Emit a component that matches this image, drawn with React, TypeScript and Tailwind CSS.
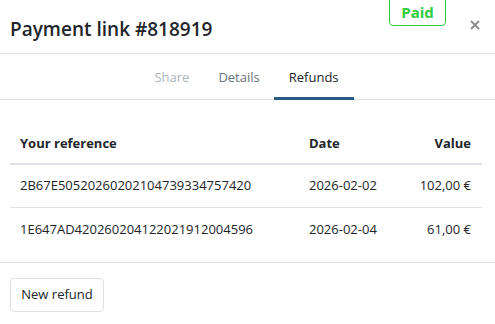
import React from "react";

const rows = [
  { ref: "2B67E50520260202104739334757420", date: "2026-02-02", value: "102,00 €" },
  { ref: "1E647AD420260204122021912004596", date: "2026-02-04", value: "61,00 €" },
];

export default function App() {
  return (
    <div
      className="relative w-[495px] h-[324px] overflow-hidden bg-white text-[#212529]"
      style={{ fontFamily: '"Open Sans", "Noto Sans", sans-serif' }}
    >
      {/* Header */}
      <div className="h-[54px] border-b border-[#dee2e6] flex items-center pl-[10px]">
        <h1 className="text-[19px] font-semibold leading-none mt-[6px]">Payment link #818919</h1>
      </div>
      <div className="absolute left-[389px] top-[-8px] w-[57px] h-[34px] border border-[#2ecc40] rounded-[4px] flex items-end justify-center pb-[3px]">
        <span className="text-[15px] font-bold text-[#2ecc40] leading-[20px]">Paid</span>
      </div>
      <button className="absolute left-[469px] top-[19px] w-[12px] h-[12px] flex items-center justify-center text-[#888]">
        <svg width="10" height="10" viewBox="0 0 10 10">
          <path d="M1 1 L9 9 M9 1 L1 9" stroke="#8a8a8a" strokeWidth="1.8" />
        </svg>
      </button>

      {/* Tabs */}
      <div className="h-[46px] border-b border-[#dee2e6] flex justify-center text-[13px]">
        <div className="flex ml-[-2px] pt-[2px]">
          <div className="px-[15px] flex items-center text-[#adb5bd]">Share</div>
          <div className="px-[14px] flex items-center text-[#6c757d]">Details</div>
          <div className="relative px-[15px] flex items-center text-[#212529]">
            Refunds
            <div className="absolute left-0 right-0 bottom-[-1px] h-[3px] bg-[#2d5b82]" />
          </div>
        </div>
      </div>

      {/* Body */}
      <div className="pl-[10px] pr-[13px] pt-[24px] pb-[11px] text-[13px]">
        <div className="grid grid-cols-[289px_1fr_auto] font-bold border-b-2 border-[#dee2e6] h-[41px] items-center">
          <div className="px-[10px]">Your reference</div>
          <div className="px-[10px]">Date</div>
          <div className="px-[11px] text-right">Value</div>
        </div>
        {rows.map((r, i) => (
          <div
            key={i}
            className={`grid grid-cols-[289px_1fr_auto] h-[43px] items-center ${i === 0 ? "border-b border-[#dee2e6]" : ""}`}
          >
            <div className="px-[10px]">{r.ref}</div>
            <div className="px-[10px]">{r.date}</div>
            <div className="px-[11px] text-right">{r.value}</div>
          </div>
        ))}
      </div>

      {/* Footer */}
      <div className="border-t border-[#dee2e6] pt-[15px] px-[10px]">
        <button className="h-[34px] w-[94px] border border-[#dee2e6] rounded-[4px] text-[13px] text-[#212529]">
          New refund
        </button>
      </div>
    </div>
  );
}
